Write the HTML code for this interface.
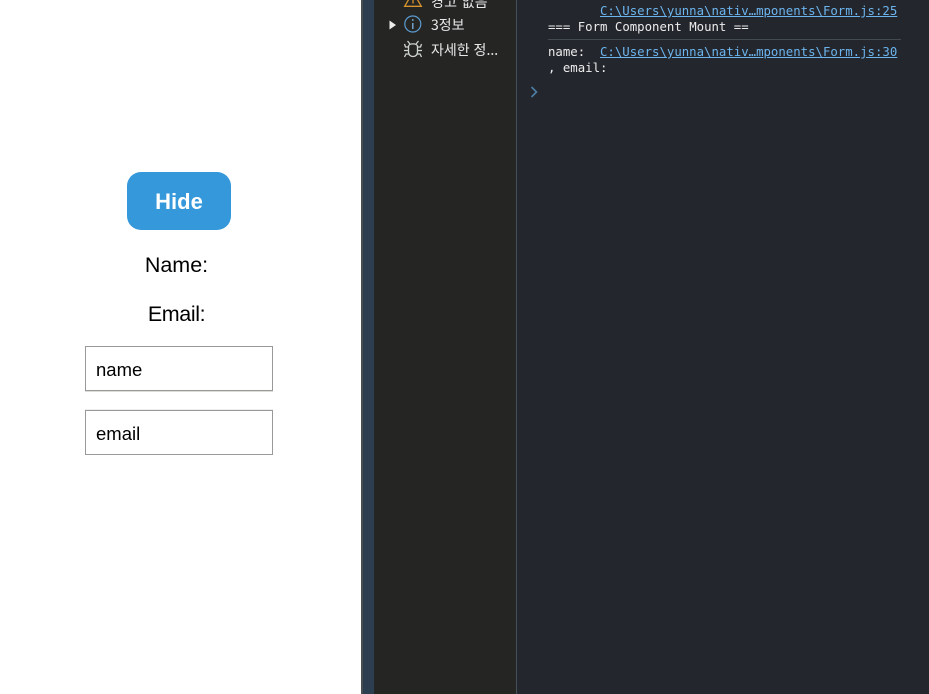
<!DOCTYPE html>
<html lang="ko">
<head>
<meta charset="utf-8">
<title>Form</title>
<style>
html,body{margin:0;padding:0;width:929px;height:694px;overflow:hidden;background:#fff}
body{position:relative;font-family:"Liberation Sans","Noto Sans CJK KR",sans-serif}
.a{position:absolute;white-space:pre}
.c{color:#000;font-size:21.5px;line-height:28px;text-align:center;left:0}
.in{position:absolute;left:85px;width:186px;height:43px;border:1px solid #999;background:#fff}
.ph{color:#000;font-size:18.5px;line-height:26px;left:96px}
.m{font-family:"DejaVu Sans Mono","Liberation Mono",monospace;font-size:12.35px;line-height:16px;color:#ececec}
.l{color:#6cb4ee;text-decoration:underline}
.k{font-family:"Noto Sans CJK KR","Liberation Sans",sans-serif;font-size:14px;line-height:20px;color:#e8e8e8}
</style>
</head>
<body>
<div class="a" style="left:127px;top:172px;width:104px;height:58px;border-radius:14px;background:#3498db"></div>
<div class="a" style="left:127px;top:187px;width:104px;text-align:center;color:#fff;font-size:22px;line-height:30px;font-weight:bold">Hide</div>
<div class="a c" style="top:251px;width:353px">Name:</div>
<div class="a c" style="top:300px;width:353px;letter-spacing:-0.4px">Email:</div>
<div class="in" style="top:346px;box-shadow:0 1px 0 #dcdcd8"></div>
<div class="a ph" style="top:357px">name</div>
<div class="in" style="top:410px;box-shadow:0 -1px 0 #eeeeee"></div>
<div class="a ph" style="top:421px">email</div>

<div class="a" style="left:361px;top:0;width:2px;height:694px;background:#4a4d50"></div>
<div class="a" style="left:363px;top:0;width:11px;height:694px;background:#2d3e50"></div>
<div class="a" style="left:374px;top:0;width:142px;height:694px;background:#252624"></div>
<div class="a" style="left:516px;top:0;width:1px;height:694px;background:#465059"></div>
<div class="a" style="left:517px;top:0;width:412px;height:694px;background:#23262c"></div>

<svg class="a" style="left:385px;top:0" width="50" height="60" viewBox="0 0 50 60">
<path d="M19.7 6.3L28-8L36.3 6.3Z" fill="none" stroke="#d9932f" stroke-width="1.3"/>
<path d="M28 0V3.5" stroke="#d9932f" stroke-width="1.3"/>
<path d="M4.5 20.5L11 25L4.5 29.5Z" fill="#ececec"/>
<circle cx="27.8" cy="24" r="8" fill="none" stroke="#5c9bd1" stroke-width="1.2"/>
<path d="M27.8 23v6" stroke="#7fb5e2" stroke-width="1.3"/>
<circle cx="27.8" cy="20" r="0.9" fill="#7fb5e2"/>
<g fill="none" stroke="#cfd3cf" stroke-width="1.3">
<path d="M23.5 46.5C23.5 43 32.5 43 32.5 46.5V52C32.5 58 23.5 58 23.5 52Z"/>
<path d="M25 44L22.5 41M31 44L33.5 41M23.5 47H20.5L19.5 44M32.5 47H35.5L36.5 44M23.5 50.5H19M32.5 50.5H37M23.5 54H21L19.5 57M32.5 54H35L36.5 57"/>
</g>
</svg>
<div class="a k" style="left:431px;top:-8px;letter-spacing:0.3px">경고 없음</div>
<div class="a k" style="left:431px;top:15px">3정보</div>
<div class="a k" style="left:431px;top:40px">자세한 정...</div>

<div class="a m l" style="left:600px;top:3px">C:\Users\yunna\nativ…mponents\Form.js:25</div>
<div class="a m" style="left:548px;top:19px">=== Form Component Mount ==</div>
<div class="a" style="left:548px;top:39px;width:353px;height:1px;background:#434a52"></div>
<div class="a m" style="left:548px;top:44px">name:</div>
<div class="a m l" style="left:600px;top:44px">C:\Users\yunna\nativ…mponents\Form.js:30</div>
<div class="a m" style="left:548px;top:60px">, email:</div>
<svg class="a" style="left:528px;top:85px" width="12" height="14" viewBox="0 0 12 14">
<path d="M3.5 2L8.5 7L3.5 12" fill="none" stroke="#4d7fa6" stroke-width="1.6"/>
</svg>
</body>
</html>
